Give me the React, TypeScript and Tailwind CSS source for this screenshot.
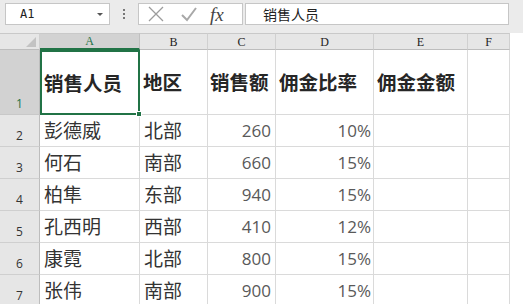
import React from "react";

const cjk = { fontFamily: '"Noto Sans CJK SC", "Noto Sans", sans-serif' };
const num = { fontFamily: '"Open Sans", "Noto Sans", sans-serif' };
const serif = { fontFamily: '"Liberation Serif", "DejaVu Serif", serif' };

const rows = [
  ["彭德威", "北部", "260", "10%"],
  ["何石", "南部", "660", "15%"],
  ["柏隼", "东部", "940", "15%"],
  ["孔西明", "西部", "410", "12%"],
  ["康霓", "北部", "800", "15%"],
  ["张伟", "南部", "900", "15%"],
];

const cell = "border-r border-b border-[#dadada] overflow-hidden";

export default function App() {
  return (
    <div className="w-[523px] h-[304px] bg-white overflow-hidden">
      {/* toolbar */}
      <div className="h-[33px] bg-[#ebebeb] flex items-start pt-[3px]">
        <div className="ml-[5px] w-[105px] h-[22px] bg-white border border-[#c6c6c6] flex items-center justify-between pl-[14px] pr-[6px]">
          <span className="text-[12px] text-[#222]" style={{ fontFamily: '"DejaVu Sans Mono", monospace' }}>A1</span>
          <span className="w-0 h-0 border-l-[3px] border-r-[3px] border-t-[3px] border-l-transparent border-r-transparent border-t-[#555]" />
        </div>
        <div className="w-[28px] h-[22px] flex flex-col items-center justify-center gap-[2px]">
          <span className="w-[2px] h-[2px] bg-[#777]" />
          <span className="w-[2px] h-[2px] bg-[#777]" />
          <span className="w-[2px] h-[2px] bg-[#777]" />
        </div>
        <div className="w-[105px] h-[22px] bg-white border border-[#c6c6c6] flex items-center">
          <svg width="20" height="20" viewBox="0 0 20 20" className="ml-[7px]">
            <path d="M3 3 L17 17 M17 3 L3 17" stroke="#9c9c9c" strokeWidth="1.3" fill="none" />
          </svg>
          <svg width="20" height="20" viewBox="0 0 20 20" className="ml-[13px]">
            <path d="M3 11 L8 16 L17 4" stroke="#a8a8a8" strokeWidth="2" fill="none" />
          </svg>
          <span className="ml-[11px] text-[19px] italic text-[#444] leading-none" style={serif}>fx</span>
        </div>
        <div className="ml-[2px] w-[264px] h-[22px] bg-white border border-[#c6c6c6] flex items-center pl-[17px]">
          <span className="text-[14px] text-[#222]" style={cjk}>销售人员</span>
        </div>
      </div>

      {/* sheet */}
      <div className="w-[510px] grid grid-cols-[40px_100px_68px_68px_98px_94px_42px] grid-rows-[17px_65px_32px_32px_32px_32px_32px_32px]">
        {/* header row */}
        <div className="bg-[#e6e6e6] border-t border-[#c9c9c9] border-r border-b border-r-[#d0d0d0] border-b-[#bdbdbd] relative">
          <div className="absolute right-[3px] bottom-[2px] w-0 h-0" style={{ borderRight: "0", borderBottom: "10px solid #c3c3c3", borderLeft: "10px solid transparent", borderTop: "0" }} />
        </div>
        <div className="bg-[#d2d2d2] border-t border-[#c9c9c9] border-b-2 border-b-[#217346] border-r border-r-[#c0c0c0] flex items-center justify-center text-[12px] text-[#217346]" style={serif}>A</div>
        {["B", "C", "D", "E", "F"].map((c) => (
          <div key={c} className="bg-[#e6e6e6] border-t border-[#c9c9c9] border-r border-r-[#d0d0d0] border-b border-b-[#bdbdbd] flex items-center justify-center text-[12px] text-[#222]" style={serif}>{c}</div>
        ))}

        {/* row 1 */}
        <div className="bg-[#d2d2d2] border-r border-r-[#bdbdbd] border-b border-b-[#c8c8c8] flex items-end justify-center pb-[1px] text-[12px] text-[#217346]" style={num}>1</div>
        <div className="relative border-2 border-[#217346] flex items-center pl-[2px]">
          <span className="text-[19.5px] font-bold text-[#262626] whitespace-nowrap" style={cjk}>销售人员</span>
          <span className="absolute -right-[4px] -bottom-[4px] w-[6px] h-[6px] bg-[#217346] border border-white" />
        </div>
        {["地区", "销售额", "佣金比率", "佣金金额", ""].map((t, i) => (
          <div key={i} className={`${cell} flex items-center ${i === 1 ? "pl-[2px]" : "pl-[3px]"}`}>
            <span className="text-[19.5px] font-bold text-[#262626] whitespace-nowrap" style={cjk}>{t}</span>
          </div>
        ))}

        {rows.map((r, i) => (
          <React.Fragment key={i}>
            <div className="bg-[#e6e6e6] border-r border-r-[#bdbdbd] border-b border-b-[#cfcfcf] flex items-end justify-center pb-[1px] text-[12px] text-[#333]" style={num}>{i + 2}</div>
            <div className={`${cell} flex items-center pl-[4px]`}>
              <span className="text-[19px] text-[#333] whitespace-nowrap" style={cjk}>{r[0]}</span>
            </div>
            <div className={`${cell} flex items-center pl-[4px]`}>
              <span className="text-[19px] text-[#333] whitespace-nowrap" style={cjk}>{r[1]}</span>
            </div>
            <div className={`${cell} flex items-center justify-end pr-[4px]`}>
              <span className="text-[17px] text-[#595959]" style={num}>{r[2]}</span>
            </div>
            <div className={`${cell} flex items-center justify-end pr-[2px]`}>
              <span className="text-[17px] text-[#595959]" style={num}>{r[3]}</span>
            </div>
            <div className={cell} />
            <div className={cell} />
          </React.Fragment>
        ))}
      </div>
    </div>
  );
}
